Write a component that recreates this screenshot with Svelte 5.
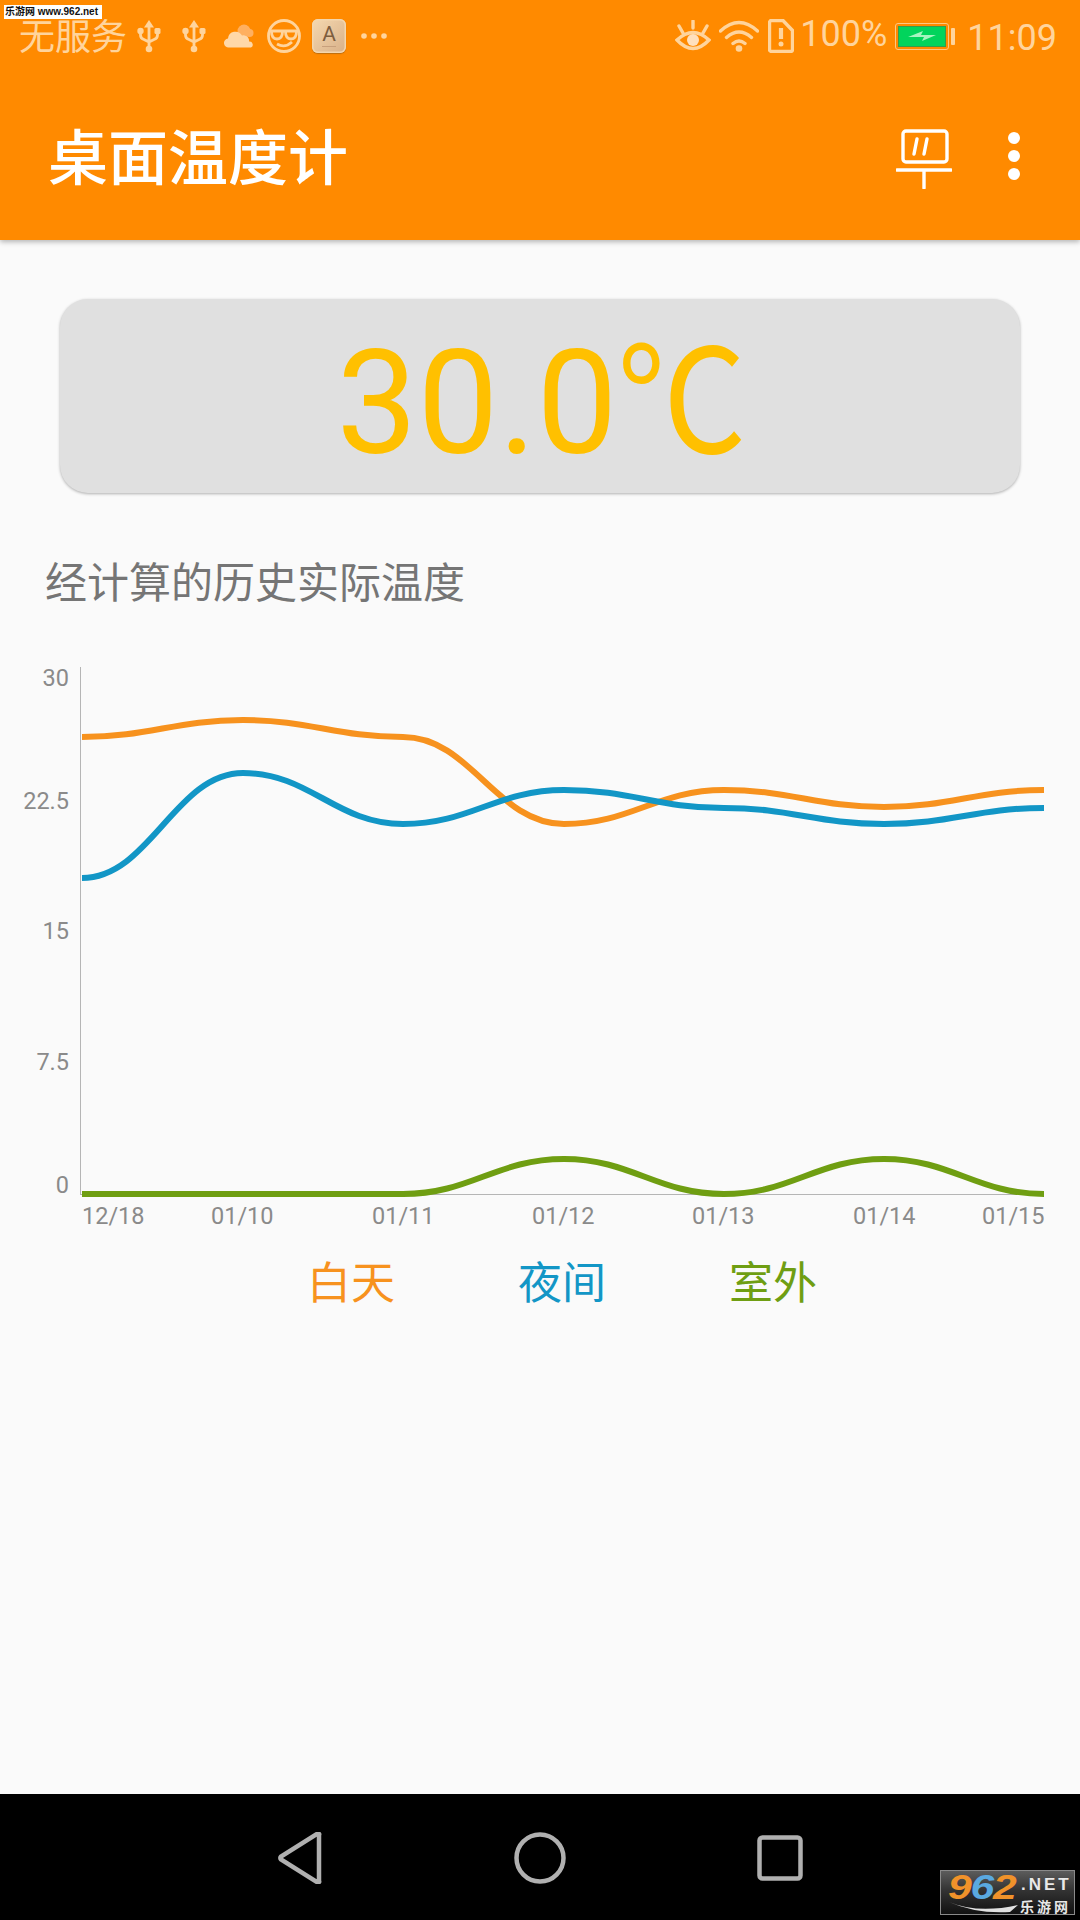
<script>
  const xs = [82, 243, 403, 564, 724, 884, 1044];
  const series = [
    { cls: 'day', ys: [737, 720, 737, 824, 790, 807, 790] },
    { cls: 'night', ys: [878, 773, 824, 790, 808, 824, 808] },
    { cls: 'out', ys: [1194, 1194, 1194, 1159, 1194, 1159, 1194] }
  ];
  function curve(ys) {
    let d = `M${xs[0]} ${ys[0]}`;
    for (let i = 1; i < xs.length; i++) {
      const dx = (xs[i] - xs[i - 1]) * 0.42;
      d += ` C${xs[i - 1] + dx} ${ys[i - 1]} ${xs[i] - dx} ${ys[i]} ${xs[i]} ${ys[i]}`;
    }
    return d;
  }
  const yLabels = [['30', 686], ['22.5', 809], ['15', 939], ['7.5', 1070], ['0', 1193]];
  const xLabels = [['12/18', 82], ['01/10', 211], ['01/11', 372], ['01/12', 532], ['01/13', 692], ['01/14', 853], ['01/15', 982]];
</script>

<div class="screen">
  <div class="mark">乐游网 www.962.net</div>
  <header class="appbar">
    <div class="status">
      <div class="status-left">
        <span class="nosvc">无服务</span>
        <svg class="ic" viewBox="0 0 24 34" width="24" height="34"><path d="M12 1l5 7.500h-10z" class="f"/><path d="M12 7v22M3.500 13v3q0 3.500 3.500 4.500l5 2.500M20.500 13v3q0 3.500-3.500 4.500l-5 2.500" class="line"/><circle cx="12" cy="30" r="3.300" class="f"/><circle cx="3.500" cy="12" r="3.200" class="f"/><rect x="17.500" y="9" width="6" height="6" rx="1.500" class="f"/></svg>
        <svg class="ic u2" viewBox="0 0 24 34" width="24" height="34"><path d="M12 1l5 7.500h-10z" class="f"/><path d="M12 7v22M3.500 13v3q0 3.500 3.500 4.500l5 2.500M20.500 13v3q0 3.500-3.500 4.500l-5 2.500" class="line"/><circle cx="12" cy="30" r="3.300" class="f"/><circle cx="3.500" cy="12" r="3.200" class="f"/><rect x="17.500" y="9" width="6" height="6" rx="1.500" class="f"/></svg>
        <svg class="ic cloud" viewBox="0 0 30 24" width="30" height="24"><circle cx="20" cy="7" r="6.500" class="back"/><circle cx="25.500" cy="9" r="4" class="back"/><path d="M5 23.500a4.500 4.500 0 0 1-1-9a7.500 7.500 0 0 1 14-3a5.500 5.500 0 0 1 7 6a3.200 3.200 0 0 1 2 6z" class="front"/></svg>
        <svg class="ic face" viewBox="0 0 34 34" width="34" height="34"><circle cx="17" cy="17" r="15.500" class="line"/><path d="M2 12h30M4.500 12.500q0 7.500 5.500 7.500t5.500-7.500M18.500 12.500q0 7.500 5.500 7.500t5.500-7.500M10 25q8 4.500 15-2" class="line"/></svg>
        <div class="keycap"><span>A</span><i></i></div>
        <svg class="ic more" viewBox="0 0 26 6" width="26" height="6"><circle cx="3" cy="3" r="2.800" class="f"/><circle cx="13" cy="3" r="2.800" class="f"/><circle cx="23" cy="3" r="2.800" class="f"/></svg>
      </div>
      <div class="status-right">
        <svg class="ic" viewBox="0 0 36 32" width="36" height="32"><path d="M2 20Q18 5 34 20Q18 37 2 20z" class="line thick"/><circle cx="18" cy="20" r="6" class="pupil"/><path d="M18 1v7M4 6l4 7M32 6l-4 7" class="line thick"/></svg>
        <svg class="ic wifi" viewBox="0 0 40 32" width="40" height="32"><path d="M1.500 11Q20-6 38.500 11M7.500 17.500q12.500-11 25 0M14 23.500q6-5 12 0" class="line thick"/><circle cx="20" cy="28.500" r="3.300" class="f"/></svg>
        <svg class="ic sim" viewBox="0 0 26 34" width="26" height="34"><path d="M4 1.500h11l9.500 10v19a2 2 0 0 1-2 2h-19a2 2 0 0 1-2-2v-27a2 2 0 0 1 2-2z" class="line thick"/><path d="M13 9v11" class="line wide"/><circle cx="13" cy="25" r="2.500" class="f"/></svg>
        <span class="pct">100%</span>
        <div class="battery"><div class="cell"><svg viewBox="0 0 30 14" width="30" height="14"><path d="M1 8l15-6-2 4 15 0-14 6 2-4z" class="bolt"/></svg></div></div>
        <div class="tip"></div>
        <span class="clock">11:09</span>
      </div>
    </div>
    <div class="toolbar">
      <h1>桌面温度计</h1>
      <svg class="mon" viewBox="0 0 56 60" width="56" height="60"><rect x="7" y="2" width="44" height="31" rx="3"/><path d="M21 10l-3 15M31 10l-3 15M1 41h54M28 41v18"/></svg>
      <div class="overflow"><i></i><i></i><i></i></div>
    </div>
  </header>

  <main>
    <div class="card"><span class="num">30.0</span><span class="unit">℃</span></div>
    <h2>经计算的历史实际温度</h2>
    <svg class="chart" viewBox="0 650 1080 590" width="1080" height="590">
      <path d="M80.500 667V1194M80 1194.500H1044" class="axis" />
      {#each series as s}
        <path d={curve(s.ys)} class="curve {s.cls}" />
      {/each}
      {#each yLabels as [t, y]}
        <text x="69" {y} text-anchor="end">{t}</text>
      {/each}
      {#each xLabels as [t, x]}
        <text {x} y="1224">{t}</text>
      {/each}
    </svg>
    <div class="legend">
      <span class="day-t">白天</span>
      <span class="night-t">夜间</span>
      <span class="out-t">室外</span>
    </div>
  </main>

  <nav>
    <svg viewBox="0 0 44 52" width="44" height="52"><path d="M41 3v46a1 1 0 0 1-2 1L3 27.500a2 2 0 0 1 0-3L39 2a1 1 0 0 1 2 1z"/></svg>
    <svg viewBox="0 0 52 52" width="52" height="52"><circle cx="26" cy="26" r="23.500"/></svg>
    <svg viewBox="0 0 46 46" width="46" height="46"><rect x="2.500" y="2.500" width="41" height="41" rx="3"/></svg>
  </nav>
  <div class="logo">
    <div class="logo-top">
      <div class="digits"><b class="n1">9</b><b class="n2">6</b><b class="n1">2</b></div>
      <span>.NET</span>
    </div>
    <div class="logo-bottom">
      <svg viewBox="0 0 72 12" width="72" height="12"><path d="M1 1Q30 13 70 4L62 11Q28 13 1 1z"/></svg>
      <span>乐游网</span>
    </div>
  </div>
</div>

<style>
  :global(body) { margin: 0; }
  .screen {
    position: relative; width: 1080px; height: 1920px; overflow: hidden;
    display: flex; flex-direction: column; background: #fafafa;
    font-family: Roboto, "Noto Sans CJK SC", sans-serif;
  }
  .mark {
    position: absolute; left: 4px; top: 5px; width: 98px; height: 14px; background: #fff; color: #111;
    font: 700 10px/14px "Liberation Sans", "Noto Sans CJK SC", sans-serif; white-space: nowrap; z-index: 2; overflow: hidden; padding-left: 1px; box-sizing: border-box;
  }
  .appbar {
    height: 240px; flex: none; background: #ff8a00; box-shadow: 0 2px 5px rgba(0,0,0,.28);
    display: flex; flex-direction: column; position: relative; z-index: 1;
  }
  .status {
    height: 72px; display: flex; justify-content: space-between; align-items: center;
    padding: 0 23px 0 19px; color: #ffd49c; font-size: 36px; box-sizing: border-box;
  }
  .status-left, .status-right { display: flex; align-items: center; }
  .ic { flex: none; display: block; }
  .f { fill: #ffd49c; }
  .line { fill: none; stroke: #ffd49c; stroke-width: 2.800; }
  .thick { stroke-width: 3.400; stroke-linecap: round; }
  .wide { stroke-width: 4.200; }
  .back { fill: #ffb060; }
  .front { fill: #ffd8a8; }
  .pupil { fill: #ffe0bd; }
  .bolt { fill: #a6f5c0; }
  .nosvc { font-size: 36px; line-height: 44px; width: 106px; margin: 4px 12px 0 0; white-space: nowrap; }
  .u2 { margin-left: 21px; }
  .cloud { margin-left: 18px; }
  .face { margin-left: 13px; }
  .keycap {
    margin-left: 11px; width: 34px; height: 34px; border-radius: 6px; box-sizing: border-box; position: relative;
    background: linear-gradient(135deg, #f5d8b0, #d8b088); color: #7d5d3e; font-size: 21px; line-height: 31px;
    text-align: center; box-shadow: inset 0 0 0 1.500px #f3d6ae, 0 1px 1px rgba(120,80,30,.5);
  }
  .keycap span { display: block; }
  .keycap i { position: absolute; left: 10px; right: 10px; bottom: 6px; height: 1px; background: #c8a07c; }
  .more { margin-left: 15px; }
  .wifi { margin-left: 8px; }
  .sim { margin-left: 9px; }
  .pct { margin-left: 6px; line-height: 40px; margin-top: -4px; }
  .battery {
    margin-left: 8px; width: 54px; height: 27px; border: 1.500px solid #ffc880; border-radius: 3px; box-sizing: border-box;
    padding: 2px; display: flex;
  }
  .cell { flex: 1; background: #02d45c; box-shadow: inset 0 0 0 1px #3a9a4a; display: flex; align-items: center; justify-content: center; }
  .tip { width: 4px; height: 17px; margin-left: 2px; background: #ffd49c; border-radius: 1px; }
  .clock { margin-left: 12px; line-height: 40px; margin-top: 4px; }
  .toolbar { flex: 1; display: flex; align-items: center; padding: 8px 0 0 48px; color: #fff; }
  h1 { margin: 0; flex: 1; font-size: 60px; line-height: 80px; font-weight: 500; color: #fff; }
  .mon { margin-right: 56px; margin-top: -2px; fill: none; flex: none; }
  .mon rect, .mon path { fill: none; stroke: #fff; stroke-width: 3.400; stroke-linecap: round; }
  .overflow { width: 12px; margin-right: 60px; display: flex; flex-direction: column; gap: 6px; margin-top: -9px; flex: none; }
  .overflow i { width: 12px; height: 12px; border-radius: 50%; background: #fff; display: block; }
  main { flex: 1; display: flex; flex-direction: column; min-height: 0; }
  .card {
    margin: 59px 60px 0; height: 194px; border-radius: 28px; background: #e0e0e0; box-shadow: 0 1px 3px rgba(0,0,0,.3);
    color: #ffc000; font-size: 144px; line-height: 210px; display: flex; justify-content: center; white-space: nowrap;
  }
  .num { flex: none; }
  .unit { flex: none; width: 128px; display: block; transform: scaleX(.9); transform-origin: left center; margin-right: -2px; }
  h2 { margin: 61px 0 0 45px; font-size: 42px; line-height: 60px; font-weight: 400; color: #757575; }
  .chart { display: block; margin-top: 36px; }
  .axis { fill: none; stroke: #b5b5b5; stroke-width: 1; }
  .curve { fill: none; stroke-width: 6; }
  .day { stroke: #f7921e; }
  .night { stroke: #1296c6; }
  .out { stroke: #6f9e12; }
  .chart text { font-size: 23.500px; fill: #8a8a8a; font-family: Roboto, sans-serif; }
  .legend { margin: 14px 36px 0 80px; display: flex; justify-content: center; gap: 123px; font-size: 44px; line-height: 60px; }
  .day-t { color: #f7921e; }
  .night-t { color: #1296c6; }
  .out-t { color: #6f9e12; }
  nav { height: 126px; flex: none; background: #000; display: flex; align-items: center; padding-left: 278px; padding-top: 2px; box-sizing: border-box; }
  nav svg { fill: none; stroke: #b0b0b0; stroke-width: 4.500; flex: none; }
  nav svg:nth-child(2) { margin-left: 192px; }
  nav svg:nth-child(3) { margin-left: 191px; }
  .logo {
    position: absolute; left: 940px; top: 1870px; width: 135px; height: 45px; box-sizing: border-box;
    background: linear-gradient(#5c5c5c, #333 45%, #111); border: 1px solid #8a8a8a; color: #e8e8e8;
    padding: 2px 5px 0 7px; display: flex; flex-direction: column;
    font: 700 15px/15px "Liberation Sans", "Noto Sans CJK SC", sans-serif;
  }
  .logo-top { display: flex; align-items: flex-start; height: 27px; }
  .digits { width: 73px; flex: none; line-height: 27px; font-size: 35px; font-style: italic; white-space: nowrap; transform: scaleX(1.22); transform-origin: left center; }
  .digits b { letter-spacing: -1px; }
  .n1 { color: #f0922a; }
  .n2 { color: #5aa9e0; }
  .logo-top span { font-size: 17px; line-height: 24px; letter-spacing: 3px; white-space: nowrap; }
  .logo-bottom { display: flex; align-items: center; justify-content: space-between; height: 14px; }
  .logo-bottom svg { fill: #e0e0e0; flex: none; }
  .logo-bottom span { font-size: 14px; line-height: 14px; letter-spacing: 3px; white-space: nowrap; }
</style>
